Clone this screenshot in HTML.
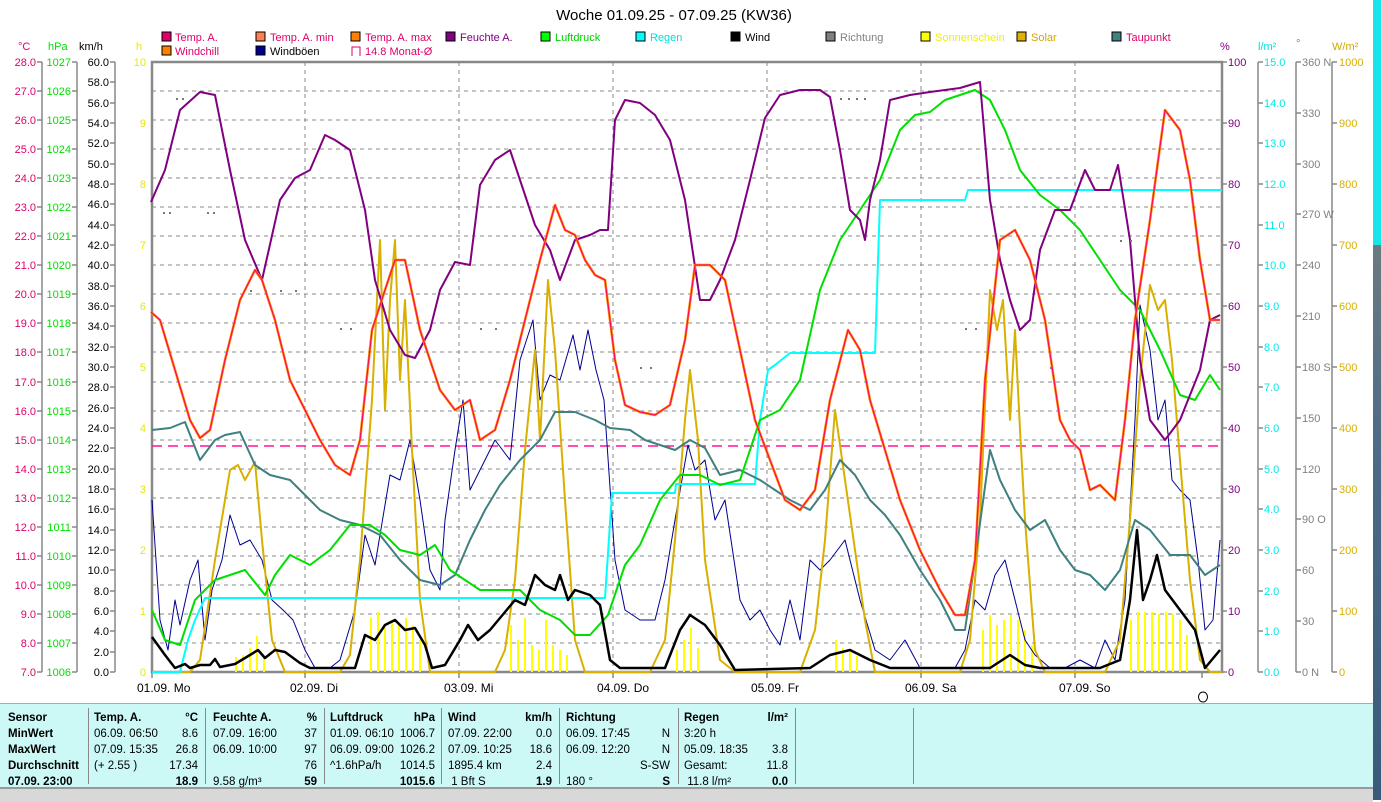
<!DOCTYPE html>
<html><head><meta charset="utf-8"><style>
body{margin:0;width:1381px;height:800px;overflow:hidden;background:#fff;font-family:"Liberation Sans",sans-serif;position:relative}
svg{position:absolute;left:0;top:0}
.t{font-family:"Liberation Sans",sans-serif;font-size:11px}
#panel{position:absolute;left:0;top:703px;width:1373px;height:84px;background:#ccf8f6;border-top:1px solid #aaa}
#status{position:absolute;left:0;top:787px;width:1373px;height:13px;background:#d8d8d8;border-top:2px solid #999}
#strip{position:absolute;left:1373px;top:0;width:8px;height:245px;background:#16e6ea}
#photo{position:absolute;left:1373px;top:245px;width:8px;height:555px;background:linear-gradient(#6a7a80,#4a6a88 40%,#3a5a7a)}
.c{position:absolute;font-size:11.5px;line-height:16px;color:#000}
.b{font-weight:bold}
.sep{position:absolute;top:708px;width:1px;height:76px;background:#888}
</style></head><body>
<div id="strip"></div><div id="photo"></div>
<div id="panel"></div><div id="status"></div>
<svg width="1381" height="800" xmlns="http://www.w3.org/2000/svg">
<text x="674" y="20" text-anchor="middle" font-family="Liberation Sans" font-size="15">Woche 01.09.25 - 07.09.25 (KW36)</text>
<g font-family="Liberation Sans" font-size="11">
<rect x="162" y="32" width="9" height="9" fill="#e0006a" stroke="#000"/><text x="175" y="41" fill="#e0006a">Temp. A.</text>
<rect x="256" y="32" width="9" height="9" fill="#ff7f50" stroke="#000"/><text x="270" y="41" fill="#e0006a">Temp. A. min</text>
<rect x="351" y="32" width="9" height="9" fill="#ff8000" stroke="#000"/><text x="365" y="41" fill="#e0006a">Temp. A. max</text>
<rect x="446" y="32" width="9" height="9" fill="#800080" stroke="#000"/><text x="460" y="41" fill="#800080">Feuchte A.</text>
<rect x="541" y="32" width="9" height="9" fill="#00ff00" stroke="#000"/><text x="555" y="41" fill="#00d000">Luftdruck</text>
<rect x="636" y="32" width="9" height="9" fill="#00ffff" stroke="#000"/><text x="650" y="41" fill="#00e0e0">Regen</text>
<rect x="731" y="32" width="9" height="9" fill="#000" stroke="#000"/><text x="745" y="41" fill="#000">Wind</text>
<rect x="826" y="32" width="9" height="9" fill="#808080" stroke="#000"/><text x="840" y="41" fill="#808080">Richtung</text>
<rect x="921" y="32" width="9" height="9" fill="#ffff00" stroke="#000"/><text x="935" y="41" fill="#f0f000">Sonnenschein</text>
<rect x="1017" y="32" width="9" height="9" fill="#e0b000" stroke="#000"/><text x="1031" y="41" fill="#d0a800">Solar</text>
<rect x="1112" y="32" width="9" height="9" fill="#408080" stroke="#000"/><text x="1126" y="41" fill="#e0006a">Taupunkt</text>
<rect x="162" y="46" width="9" height="9" fill="#ff8000" stroke="#000"/><text x="175" y="55" fill="#e0006a">Windchill</text>
<rect x="256" y="46" width="9" height="9" fill="#000090" stroke="#000"/><text x="270" y="55" fill="#000">Windböen</text>
<path d="M352 56V47h8v9" fill="none" stroke="#e0006a"/><text x="365" y="55" fill="#e0006a">14.8 Monat-Ø</text>
<text x="18" y="50" fill="#e0006a">°C</text><text x="48" y="50" fill="#00e000">hPa</text><text x="79" y="50" fill="#000">km/h</text><text x="136" y="50" fill="#e8e800">h</text>
<text x="1220" y="50" fill="#800080">%</text><text x="1258" y="50" fill="#00e0e0">l/m²</text><text x="1296" y="47" fill="#808080">°</text><text x="1332" y="50" fill="#d0a800">W/m²</text>
</g>
<!-- grid -->
<g stroke="#888" stroke-dasharray="4,4" stroke-width="1">
<path d="M152 91H1222M152 120H1222M152 149H1222M152 178H1222M152 207H1222M152 236H1222M152 265H1222M152 294H1222M152 323H1222M152 352H1222M152 382H1222M152 411H1222M152 440H1222M152 469H1222M152 498H1222M152 527H1222M152 556H1222M152 585H1222M152 614H1222M152 643H1222"/>
<path d="M305 62V672M459 62V672M613 62V672M767 62V672M921 62V672M1075 62V672"/>
</g>
<rect x="152" y="62" width="1070" height="610" fill="none" stroke="#888" stroke-width="2.5"/>
<path d="M152 672v6M305 672v6M459 672v6M613 672v6M767 672v6M921 672v6M1075 672v6M1202 672v6" stroke="#888" stroke-width="1.5"/>
<!-- axes -->
<g stroke="#888" stroke-width="1.5" fill="none">
<path d="M42 62V672M77 62V672M115 62V672M1258 62V672M1296 62V672M1332 62V672"/>
<path d="M37 62h5M37 91h5M37 120h5M37 149h5M37 178h5M37 207h5M37 236h5M37 265h5M37 294h5M37 323h5M37 352h5M37 382h5M37 411h5M37 440h5M37 469h5M37 498h5M37 527h5M37 556h5M37 585h5M37 614h5M37 643h5M37 672h5"/>
<path d="M72 62h5M72 91h5M72 120h5M72 149h5M72 178h5M72 207h5M72 236h5M72 265h5M72 294h5M72 323h5M72 352h5M72 382h5M72 411h5M72 440h5M72 469h5M72 498h5M72 527h5M72 556h5M72 585h5M72 614h5M72 643h5M72 672h5"/>
<path d="M110 62h5M110 82h5M110 103h5M110 123h5M110 143h5M110 164h5M110 184h5M110 204h5M110 225h5M110 245h5M110 265h5M110 286h5M110 306h5M110 326h5M110 347h5M110 367h5M110 387h5M110 408h5M110 428h5M110 448h5M110 469h5M110 489h5M110 509h5M110 530h5M110 550h5M110 570h5M110 591h5M110 611h5M110 631h5M110 652h5M110 672h5"/>
<path d="M1222 62h5M1222 123h5M1222 184h5M1222 245h5M1222 306h5M1222 367h5M1222 428h5M1222 489h5M1222 550h5M1222 611h5M1222 672h5"/>
<path d="M1258 62h5M1258 103h5M1258 143h5M1258 184h5M1258 225h5M1258 265h5M1258 306h5M1258 347h5M1258 387h5M1258 428h5M1258 469h5M1258 509h5M1258 550h5M1258 591h5M1258 631h5M1258 672h5"/>
<path d="M1296 62h5M1296 113h5M1296 164h5M1296 214h5M1296 265h5M1296 316h5M1296 367h5M1296 418h5M1296 469h5M1296 519h5M1296 570h5M1296 621h5M1296 672h5"/>
<path d="M1332 62h5M1332 123h5M1332 184h5M1332 245h5M1332 306h5M1332 367h5M1332 428h5M1332 489h5M1332 550h5M1332 611h5M1332 672h5"/>
</g>
<g font-family="Liberation Sans" font-size="11">
<g fill="#e0006a" text-anchor="end">
<text x="36" y="66">28.0</text><text x="36" y="95">27.0</text><text x="36" y="124">26.0</text><text x="36" y="153">25.0</text><text x="36" y="182">24.0</text><text x="36" y="211">23.0</text><text x="36" y="240">22.0</text><text x="36" y="269">21.0</text><text x="36" y="298">20.0</text><text x="36" y="327">19.0</text><text x="36" y="356">18.0</text><text x="36" y="386">17.0</text><text x="36" y="415">16.0</text><text x="36" y="444">15.0</text><text x="36" y="473">14.0</text><text x="36" y="502">13.0</text><text x="36" y="531">12.0</text><text x="36" y="560">11.0</text><text x="36" y="589">10.0</text><text x="36" y="618">9.0</text><text x="36" y="647">8.0</text><text x="36" y="676">7.0</text></g>
<g fill="#00e000" text-anchor="end">
<text x="71" y="66">1027</text><text x="71" y="95">1026</text><text x="71" y="124">1025</text><text x="71" y="153">1024</text><text x="71" y="182">1023</text><text x="71" y="211">1022</text><text x="71" y="240">1021</text><text x="71" y="269">1020</text><text x="71" y="298">1019</text><text x="71" y="327">1018</text><text x="71" y="356">1017</text><text x="71" y="386">1016</text><text x="71" y="415">1015</text><text x="71" y="444">1014</text><text x="71" y="473">1013</text><text x="71" y="502">1012</text><text x="71" y="531">1011</text><text x="71" y="560">1010</text><text x="71" y="589">1009</text><text x="71" y="618">1008</text><text x="71" y="647">1007</text><text x="71" y="676">1006</text></g>
<g fill="#000" text-anchor="end">
<text x="109" y="66">60.0</text><text x="109" y="86">58.0</text><text x="109" y="107">56.0</text><text x="109" y="127">54.0</text><text x="109" y="147">52.0</text><text x="109" y="168">50.0</text><text x="109" y="188">48.0</text><text x="109" y="208">46.0</text><text x="109" y="229">44.0</text><text x="109" y="249">42.0</text><text x="109" y="269">40.0</text><text x="109" y="290">38.0</text><text x="109" y="310">36.0</text><text x="109" y="330">34.0</text><text x="109" y="351">32.0</text><text x="109" y="371">30.0</text><text x="109" y="391">28.0</text><text x="109" y="412">26.0</text><text x="109" y="432">24.0</text><text x="109" y="452">22.0</text><text x="109" y="473">20.0</text><text x="109" y="493">18.0</text><text x="109" y="513">16.0</text><text x="109" y="534">14.0</text><text x="109" y="554">12.0</text><text x="109" y="574">10.0</text><text x="109" y="595">8.0</text><text x="109" y="615">6.0</text><text x="109" y="635">4.0</text><text x="109" y="656">2.0</text><text x="109" y="676">0.0</text></g>
<g fill="#e8e800" text-anchor="end">
<text x="146" y="66">10</text><text x="146" y="127">9</text><text x="146" y="188">8</text><text x="146" y="249">7</text><text x="146" y="310">6</text><text x="146" y="371">5</text><text x="146" y="432">4</text><text x="146" y="493">3</text><text x="146" y="554">2</text><text x="146" y="615">1</text><text x="146" y="676">0</text></g>
<g fill="#800080">
<text x="1228" y="66">100</text><text x="1228" y="127">90</text><text x="1228" y="188">80</text><text x="1228" y="249">70</text><text x="1228" y="310">60</text><text x="1228" y="371">50</text><text x="1228" y="432">40</text><text x="1228" y="493">30</text><text x="1228" y="554">20</text><text x="1228" y="615">10</text><text x="1228" y="676">0</text></g>
<g fill="#00e8e8">
<text x="1264" y="66">15.0</text><text x="1264" y="107">14.0</text><text x="1264" y="147">13.0</text><text x="1264" y="188">12.0</text><text x="1264" y="229">11.0</text><text x="1264" y="269">10.0</text><text x="1264" y="310">9.0</text><text x="1264" y="351">8.0</text><text x="1264" y="391">7.0</text><text x="1264" y="432">6.0</text><text x="1264" y="473">5.0</text><text x="1264" y="513">4.0</text><text x="1264" y="554">3.0</text><text x="1264" y="595">2.0</text><text x="1264" y="635">1.0</text><text x="1264" y="676">0.0</text></g>
<g fill="#808080">
<text x="1302" y="66">360 N</text><text x="1302" y="117">330</text><text x="1302" y="168">300</text><text x="1302" y="218">270 W</text><text x="1302" y="269">240</text><text x="1302" y="320">210</text><text x="1302" y="371">180 S</text><text x="1302" y="422">150</text><text x="1302" y="473">120</text><text x="1302" y="523">90  O</text><text x="1302" y="574">60</text><text x="1302" y="625">30</text><text x="1302" y="676">0    N</text></g>
<g fill="#d8b000">
<text x="1339" y="66">1000</text><text x="1339" y="127">900</text><text x="1339" y="188">800</text><text x="1339" y="249">700</text><text x="1339" y="310">600</text><text x="1339" y="371">500</text><text x="1339" y="432">400</text><text x="1339" y="493">300</text><text x="1339" y="554">200</text><text x="1339" y="615">100</text><text x="1339" y="676">0</text></g>
<g fill="#000" font-size="12">
<text x="137" y="692">01.09.  Mo</text><text x="290" y="692">02.09.  Di</text><text x="444" y="692">03.09.  Mi</text><text x="597" y="692">04.09.  Do</text><text x="751" y="692">05.09.  Fr</text><text x="905" y="692">06.09.  Sa</text><text x="1059" y="692">07.09.  So</text>
</g>
</g>
<ellipse cx="1203" cy="697" rx="4.5" ry="5" fill="none" stroke="#000"/>
<!-- sunshine bars -->
<g fill="#ffff00">
<rect x="235" y="657" width="2" height="15"/><rect x="242" y="655" width="2" height="17"/><rect x="249" y="648" width="2" height="24"/><rect x="256" y="636" width="2" height="36"/><rect x="263" y="656" width="2" height="16"/>
<rect x="370" y="618" width="2" height="54"/><rect x="377" y="612" width="2" height="60"/><rect x="384" y="628" width="2" height="44"/><rect x="391" y="620" width="2" height="52"/><rect x="398" y="625" width="2" height="47"/><rect x="405" y="618" width="2" height="54"/><rect x="412" y="625" width="2" height="47"/><rect x="419" y="640" width="2" height="32"/>
<rect x="510" y="625" width="2" height="47"/><rect x="517" y="640" width="2" height="32"/><rect x="524" y="618" width="2" height="54"/><rect x="531" y="645" width="2" height="27"/><rect x="538" y="650" width="2" height="22"/><rect x="545" y="620" width="2" height="52"/><rect x="552" y="645" width="2" height="27"/><rect x="559" y="650" width="2" height="22"/><rect x="566" y="655" width="2" height="17"/>
<rect x="676" y="650" width="2" height="22"/><rect x="683" y="640" width="2" height="32"/><rect x="690" y="628" width="2" height="44"/><rect x="697" y="648" width="2" height="24"/>
<rect x="835" y="640" width="2" height="32"/><rect x="842" y="648" width="2" height="24"/><rect x="849" y="652" width="2" height="20"/><rect x="856" y="656" width="2" height="16"/>
<rect x="982" y="630" width="2" height="42"/><rect x="989" y="615" width="2" height="57"/><rect x="996" y="625" width="2" height="47"/><rect x="1003" y="620" width="2" height="52"/><rect x="1010" y="615" width="2" height="57"/><rect x="1017" y="620" width="2" height="52"/><rect x="1024" y="630" width="2" height="42"/><rect x="1031" y="645" width="2" height="27"/>
<rect x="1130" y="620" width="2" height="52"/><rect x="1137" y="612" width="2" height="60"/><rect x="1144" y="612" width="2" height="60"/><rect x="1151" y="612" width="2" height="60"/><rect x="1158" y="614" width="2" height="58"/><rect x="1165" y="612" width="2" height="60"/><rect x="1172" y="614" width="2" height="58"/><rect x="1179" y="620" width="2" height="52"/><rect x="1186" y="635" width="2" height="37"/>
</g>
<!-- 14.8 line -->
<path d="M152 446H1222" stroke="#ff1493" stroke-width="1.5" stroke-dasharray="10,6"/>
<g fill="none" stroke-linejoin="round">
<!-- gusts -->
<polyline stroke="#000090" stroke-width="1" points="152,500 160,620 168,650 175,600 180,625 190,580 198,560 205,640 212,590 222,560 230,515 240,545 250,540 262,560 272,600 283,610 293,620 305,650 315,668 330,668 340,660 355,610 365,535 375,565 390,475 400,480 410,440 420,500 430,570 440,590 445,520 455,450 463,400 470,490 480,470 495,440 510,460 520,360 533,320 540,400 550,375 560,380 573,335 580,370 588,330 596,370 604,400 615,560 625,610 640,620 655,620 665,580 675,520 688,445 695,470 705,460 715,520 725,500 740,600 750,620 760,610 770,630 780,645 790,600 800,640 810,560 820,570 830,560 845,540 860,600 875,650 890,660 905,640 920,668 940,668 955,668 965,650 975,600 985,610 995,575 1005,560 1015,600 1025,640 1035,655 1050,668 1065,668 1080,660 1095,668 1105,640 1115,660 1125,600 1135,420 1140,305 1150,350 1158,420 1165,400 1172,480 1180,490 1190,500 1198,560 1205,630 1213,620 1220,540"/>
<!-- solar -->
<polyline stroke="#d8b000" stroke-width="2" points="152,672 190,672 200,660 215,560 230,470 238,465 245,480 255,462 262,540 272,640 285,672 340,672 350,655 360,560 372,400 380,240 385,410 390,300 395,240 400,380 405,300 412,450 420,600 430,672 495,672 505,650 515,580 525,450 535,350 540,440 548,280 555,350 565,500 575,640 585,672 650,672 665,640 675,540 685,420 690,370 698,440 705,560 720,660 735,672 800,672 815,630 825,540 835,410 845,480 855,550 865,620 875,672 960,672 970,640 980,520 990,290 997,330 1003,300 1010,420 1015,330 1020,430 1025,520 1035,650 1045,672 1105,672 1120,640 1130,520 1140,380 1150,285 1158,310 1165,300 1172,360 1180,460 1190,580 1200,660 1210,672 1222,672"/>
<!-- rain -->
<polyline stroke="#00ffff" stroke-width="2" points="152,672 180,672 188,640 195,620 205,598 605,598 612,493 675,493 676,484 755,484 760,420 768,370 775,365 790,353 875,353 880,200 965,200 968,190 1222,190"/>
<!-- dewpoint -->
<polyline stroke="#408080" stroke-width="2" points="152,430 170,428 185,422 200,460 215,440 225,435 240,432 255,465 270,475 290,480 305,495 320,510 340,520 360,525 380,535 400,560 420,580 440,585 455,575 470,540 485,510 500,485 520,460 540,440 555,412 575,412 595,420 610,428 630,430 645,440 660,445 675,450 690,440 705,448 720,475 740,470 760,480 775,490 790,500 810,510 825,490 840,460 855,475 870,500 885,515 900,535 920,570 940,600 955,630 965,630 975,560 990,450 1000,480 1015,510 1030,530 1045,520 1060,550 1075,570 1090,575 1105,590 1120,570 1135,520 1150,530 1170,555 1190,555 1205,575 1220,565"/>
<!-- pressure -->
<polyline stroke="#00e000" stroke-width="2" points="152,610 165,640 180,645 195,600 215,580 245,570 265,595 275,575 290,555 310,565 330,550 350,525 370,525 385,535 400,550 420,555 435,545 450,570 465,580 480,590 500,590 520,590 540,610 560,620 575,635 590,635 608,615 625,565 640,545 660,500 680,475 700,475 720,485 740,480 760,420 780,410 800,380 820,290 840,240 860,210 880,180 900,130 915,115 930,112 945,100 960,95 975,90 990,100 1005,130 1020,170 1040,195 1060,210 1080,230 1100,260 1120,290 1140,310 1160,350 1180,395 1195,400 1210,375 1220,390"/>
<!-- humidity -->
<polyline stroke="#800080" stroke-width="2" points="151,202 165,170 180,110 200,92 215,95 230,170 245,240 262,280 280,200 295,178 310,170 325,135 335,140 350,150 365,210 375,280 390,330 405,355 415,358 430,330 440,290 455,262 470,265 480,185 495,160 510,150 520,180 535,225 550,250 560,280 575,240 590,235 600,230 608,230 615,120 625,100 640,103 655,115 670,140 685,200 700,300 710,300 720,280 735,240 750,180 765,118 780,95 800,90 820,90 830,97 840,150 850,210 860,220 865,240 870,200 880,160 890,100 910,95 930,92 960,88 980,82 990,200 1000,260 1010,300 1020,330 1030,320 1040,250 1055,210 1070,210 1085,170 1095,190 1110,190 1118,165 1130,240 1140,360 1150,420 1165,440 1180,420 1200,370 1210,320 1220,315"/>
<!-- temperature -->
<polyline stroke="#ff8000" stroke-width="2.5" points="151,312 160,320 175,370 190,420 200,438 210,430 225,360 240,300 255,270 262,280 275,320 290,380 305,410 320,440 335,465 350,475 360,440 372,330 385,290 395,260 405,260 420,330 440,390 455,410 470,400 480,440 495,430 510,380 525,320 540,260 555,205 565,230 575,235 585,260 595,275 605,280 615,360 625,405 640,412 655,415 670,405 685,340 695,265 710,265 725,280 740,350 755,420 770,460 785,500 800,510 815,490 830,400 848,330 860,350 870,400 885,450 900,500 920,550 940,590 955,615 965,615 975,560 985,380 1000,240 1015,230 1030,260 1045,320 1060,420 1070,440 1080,450 1090,490 1100,485 1115,500 1125,420 1135,320 1150,220 1165,110 1180,130 1190,180 1200,260 1210,320 1220,320"/>
<polyline stroke="#ff0060" stroke-width="1" points="151,312 160,320 175,370 190,420 200,438 210,430 225,360 240,300 255,270 262,280 275,320 290,380 305,410 320,440 335,465 350,475 360,440 372,330 385,290 395,260 405,260 420,330 440,390 455,410 470,400 480,440 495,430 510,380 525,320 540,260 555,205 565,230 575,235 585,260 595,275 605,280 615,360 625,405 640,412 655,415 670,405 685,340 695,265 710,265 725,280 740,350 755,420 770,460 785,500 800,510 815,490 830,400 848,330 860,350 870,400 885,450 900,500 920,550 940,590 955,615 965,615 975,560 985,380 1000,240 1015,230 1030,260 1045,320 1060,420 1070,440 1080,450 1090,490 1100,485 1115,500 1125,420 1135,320 1150,220 1165,110 1180,130 1190,180 1200,260 1210,320 1220,320"/>
<!-- wind -->
<polyline stroke="#000" stroke-width="2.5" points="152,637 165,655 175,668 185,664 190,668 200,665 210,665 215,659 220,667 235,664 250,655 258,650 265,658 275,650 285,652 300,663 310,668 340,668 355,668 365,635 375,640 385,625 395,620 405,630 415,628 425,645 432,668 445,665 460,640 468,625 478,640 490,630 505,612 515,600 525,605 535,575 545,585 555,590 560,575 568,600 575,590 590,595 600,605 610,660 620,668 665,668 680,630 690,615 705,625 720,645 735,670 810,668 830,655 850,650 870,660 890,668 990,668 1010,655 1025,665 1040,668 1100,668 1120,660 1130,600 1137,530 1143,600 1150,580 1157,555 1165,590 1180,610 1195,630 1205,668 1220,650"/>
</g>
<!-- direction dots -->
<g fill="#777">
<rect x="176" y="98" width="2" height="2"/><rect x="182" y="98" width="2" height="2"/><rect x="163" y="212" width="2" height="2"/><rect x="169" y="212" width="2" height="2"/><rect x="207" y="212" width="2" height="2"/><rect x="213" y="212" width="2" height="2"/><rect x="250" y="290" width="2" height="2"/><rect x="265" y="290" width="2" height="2"/><rect x="280" y="290" width="2" height="2"/><rect x="295" y="290" width="2" height="2"/><rect x="340" y="328" width="2" height="2"/><rect x="350" y="328" width="2" height="2"/><rect x="480" y="328" width="2" height="2"/><rect x="495" y="328" width="2" height="2"/><rect x="640" y="367" width="2" height="2"/><rect x="650" y="367" width="2" height="2"/><rect x="840" y="98" width="2" height="2"/><rect x="848" y="98" width="2" height="2"/><rect x="856" y="98" width="2" height="2"/><rect x="864" y="98" width="2" height="2"/><rect x="965" y="328" width="2" height="2"/><rect x="975" y="328" width="2" height="2"/><rect x="1120" y="240" width="2" height="2"/><rect x="1130" y="240" width="2" height="2"/><rect x="1050" y="367" width="2" height="2"/>
</g>
</svg>
<div class="sep" style="left:88px"></div><div class="sep" style="left:205px"></div><div class="sep" style="left:324px"></div><div class="sep" style="left:441px"></div><div class="sep" style="left:559px"></div><div class="sep" style="left:678px"></div><div class="sep" style="left:795px"></div><div class="sep" style="left:913px"></div>
<div class="c b" style="left:8px;top:710px">Sensor<br>MinWert<br>MaxWert<br>Durchschnitt<br>07.09. 23:00</div>
<div class="c" style="left:94px;top:710px"><b>Temp. A.</b><br>06.09. 06:50<br>07.09. 15:35<br>(+ 2.55 )</div>
<div class="c" style="left:150px;top:710px;width:48px;text-align:right"><b>°C</b><br>8.6<br>26.8<br>17.34<br><b>18.9</b></div>
<div class="c" style="left:213px;top:710px"><b>Feuchte A.</b><br>07.09. 16:00<br>06.09. 10:00<br><br>9.58 g/m³</div>
<div class="c" style="left:270px;top:710px;width:47px;text-align:right"><b>%</b><br>37<br>97<br>76<br><b>59</b></div>
<div class="c" style="left:330px;top:710px"><b>Luftdruck</b><br>01.09. 06:10<br>06.09. 09:00<br>^1.6hPa/h</div>
<div class="c" style="left:390px;top:710px;width:45px;text-align:right"><b>hPa</b><br>1006.7<br>1026.2<br>1014.5<br><b>1015.6</b></div>
<div class="c" style="left:448px;top:710px"><b>Wind</b><br>07.09. 22:00<br>07.09. 10:25<br>1895.4 km<br>&nbsp;1 Bft S</div>
<div class="c" style="left:510px;top:710px;width:42px;text-align:right"><b>km/h</b><br>0.0<br>18.6<br>2.4<br><b>1.9</b></div>
<div class="c" style="left:566px;top:710px"><b>Richtung</b><br>06.09. 17:45<br>06.09. 12:20<br><br>180 °</div>
<div class="c" style="left:620px;top:710px;width:50px;text-align:right"><br>N<br>N<br>S-SW<br><b>S</b></div>
<div class="c" style="left:684px;top:710px"><b>Regen</b><br>3:20 h<br>05.09. 18:35<br>Gesamt:<br>&nbsp;11.8 l/m²</div>
<div class="c" style="left:750px;top:710px;width:38px;text-align:right"><b>l/m²</b><br><br>3.8<br>11.8<br><b>0.0</b></div>
</body></html>
